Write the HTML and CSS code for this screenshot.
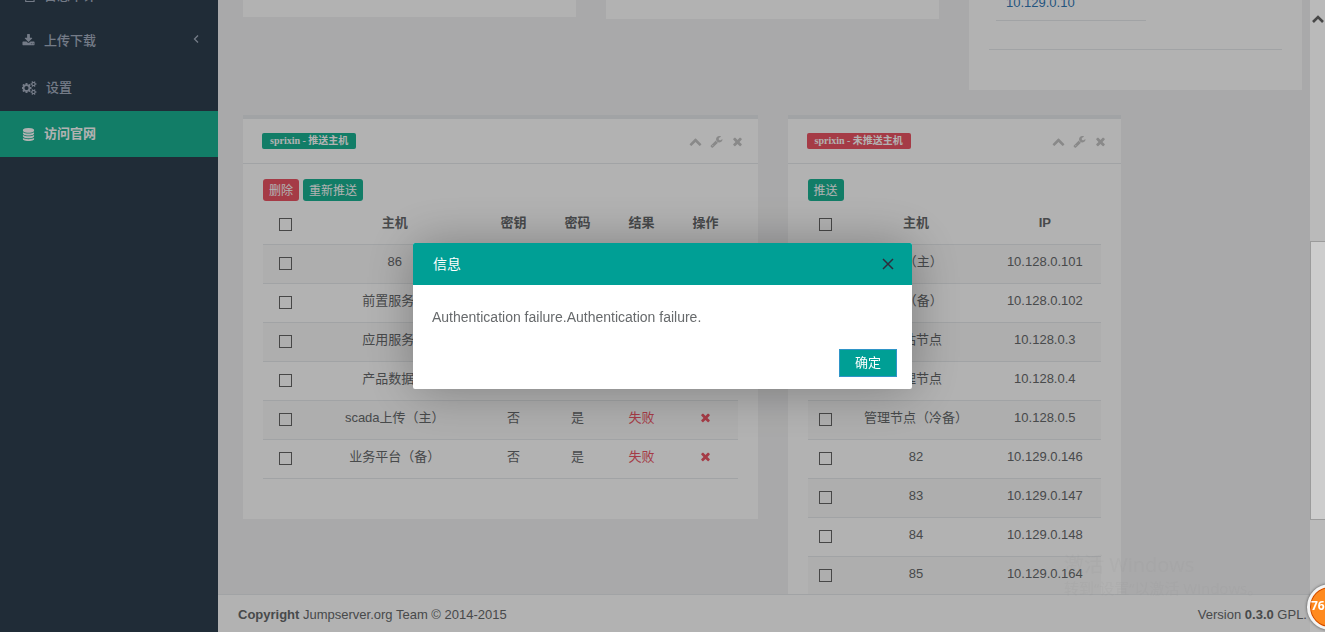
FILE: index.html
```html
<!DOCTYPE html>
<html lang="zh-CN">
<head>
<meta charset="utf-8">
<title>Jumpserver</title>
<link rel="stylesheet" href="styles.css">
</head>
<body>
<svg class="sprite" aria-hidden="true">
  <symbol id="i-download" viewBox="0 0 1792 1792"><path d="M1344 1344q0-26-19-45t-45-19-45 19-19 45 19 45 45 19 45-19 19-45zm256 0q0-26-19-45t-45-19-45 19-19 45 19 45 45 19 45-19 19-45zm128-224v320q0 40-28 68t-68 28h-1472q-40 0-68-28t-28-68v-320q0-40 28-68t68-28h465l135 136q58 56 136 56t136-56l136-136h464q40 0 68 28t28 68zm-325-569q17 41-14 70l-448 448q-18 19-45 19t-45-19l-448-448q-31-29-14-70 17-39 59-39h256v-448q0-26 19-45t45-19h256q26 0 45 19t19 45v448h256q42 0 59 39z"/></symbol>
  <symbol id="i-cogs" viewBox="0 0 1920 1792"><path d="M832 896q0-106-75-181t-181-75-181 75-75 181 75 181 181 75 181-75 75-181zm768 512q0-52-38-90t-90-38-90 38-38 90q0 53 37.500 90.500t90.500 37.500 90.500-37.500 37.500-90.500zm0-1024q0-52-38-90t-90-38-90 38-38 90q0 53 37.500 90.500t90.500 37.500 90.500-37.500 37.500-90.500zm-384 421v185q0 10-7 19.500t-16 10.500l-155 24q-11 35-32 76 34 48 90 115 7 11 7 20 0 12-7 19-23 30-82.500 89.500t-78.500 59.500q-11 0-21-7l-115-90q-37 19-77 31-11 108-23 155-7 24-30 24h-186q-11 0-20-7.500t-10-17.500l-23-153q-34-10-75-31l-118 89q-7 7-20 7-11 0-21-8-144-133-144-160 0-9 7-19 10-14 41-53t47-61q-23-44-35-82l-152-24q-10-1-17-9.500t-7-19.500v-185q0-10 7-19.500t16-10.500l155-24q11-35 32-76-34-48-90-115-7-11-7-20 0-12 7-20 22-30 82-89t79-59q11 0 21 7l115 90q34-18 77-32 11-108 23-154 7-24 30-24h186q11 0 20 7.500t10 17.500l23 153q34 10 75 31l118-89q8-7 20-7 11 0 21 8 144 133 144 160 0 8-7 19-12 16-42 54t-45 60q23 48 34 82l152 23q10 2 17 10.500t7 19.500zm640 533v140q0 16-149 31-12 27-30 52 51 113 51 138 0 4-4 7-122 71-124 71-8 0-46-47t-52-68q-20 2-30 2t-30-2q-14 21-52 68t-46 47q-2 0-124-71-4-3-4-7 0-25 51-138-18-25-30-52-149-15-149-31v-140q0-16 149-31 13-29 30-52-51-113-51-138 0-4 4-7 4-2 35-20t59-34 30-16q8 0 46 46.500t52 67.500q20-2 30-2t30 2q51-71 92-112l6-2q4 0 124 70 4 3 4 7 0 25-51 138 17 23 30 52 149 15 149 31zm0-1024v140q0 16-149 31-12 27-30 52 51 113 51 138 0 4-4 7-122 71-124 71-8 0-46-47t-52-68q-20 2-30 2t-30-2q-14 21-52 68t-46 47q-2 0-124-71-4-3-4-7 0-25 51-138-18-25-30-52-149-15-149-31v-140q0-16 149-31 13-29 30-52-51-113-51-138 0-4 4-7 4-2 35-20t59-34 30-16q8 0 46 46.500t52 67.500q20-2 30-2t30 2q51-71 92-112l6-2q4 0 124 70 4 3 4 7 0 25-51 138 17 23 30 52 149 15 149 31z"/></symbol>
  <symbol id="i-database" viewBox="0 0 1792 1792"><path d="M896 768q237 0 443-43t325-127v170q0 69-103 128t-280 93.500-385 34.500-385-34.500-280-93.500-103-128v-170q119 84 325 127t443 43zm0 768q237 0 443-43t325-127v170q0 69-103 128t-280 93.500-385 34.500-385-34.500-280-93.500-103-128v-170q119 84 325 127t443 43zm0-384q237 0 443-43t325-127v170q0 69-103 128t-280 93.500-385 34.500-385-34.500-280-93.500-103-128v-170q119 84 325 127t443 43zm0-1152q208 0 385 34.500t280 93.500 103 128v128q0 69-103 128t-280 93.500-385 34.500-385-34.500-280-93.500-103-128v-128q0-69 103-128t280-93.500 385-34.500z"/></symbol>
  <symbol id="i-file" viewBox="0 0 14 14"><path fill="none" stroke="currentColor" stroke-width="1.200" d="M4 .6h9v12.800H4z"/></symbol>
  <symbol id="i-angle" viewBox="0 0 8 12"><path fill="none" stroke="currentColor" stroke-width="1.300" d="M6 2.500 2.500 6 6 9.500"/></symbol>
  <symbol id="i-up" viewBox="0 0 1792 1792"><path d="M1683 1331l-166 165q-19 19-45 19t-45-19l-531-531-531 531q-19 19-45 19t-45-19l-166-165q-19-19-19-45.500t19-45.500l742-741q19-19 45-19t45 19l742 741q19 19 19 45.500t-19 45.500z"/></symbol>
  <symbol id="i-wrench" viewBox="0 0 1792 1792"><path d="M448 1472q0-26-19-45t-45-19-45 19-19 45 19 45 45 19 45-19 19-45zm644-420l-682 682q-37 37-90 37-52 0-91-37l-106-108q-38-36-38-90 0-53 38-91l681-681q39 98 114.500 173.500t173.500 114.500zm634-435q0 39-23 106-47 134-164.500 217.500t-258.500 83.500q-185 0-316.500-131.500t-131.500-316.500 131.500-316.500 316.500-131.500q58 0 121.500 16.500t107.500 46.500q16 11 16 28t-16 28l-293 169v224l193 107q5-3 79-48.500t135.500-81 70.500-35.500q15 0 23.500 10t8.500 25z"/></symbol>
  <symbol id="i-times" viewBox="0 0 1792 1792"><path d="M1490 1322q0 40-28 68l-136 136q-28 28-68 28t-68-28l-294-294-294 294q-28 28-68 28t-68-28l-136-136q-28-28-28-68t28-68l294-294-294-294q-28-28-28-68t28-68l136-136q28-28 68-28t68 28l294 294 294-294q28-28 68-28t68 28l136 136q28 28 28 68t-28 68l-294 294 294 294q28 28 28 68z"/></symbol>
</svg>

<div class="shell">
  <nav class="sidebar">
    <a class="nav-item nav-first" href="#"><svg class="icon"><use href="#i-file"/></svg><span>日志审计</span></a>
    <a class="nav-item" href="#"><svg class="icon"><use href="#i-download"/></svg><span>上传下载</span><svg class="nav-arrow"><use href="#i-angle"/></svg></a>
    <a class="nav-item" href="#"><svg class="icon icon-wide"><use href="#i-cogs"/></svg><span>设置</span></a>
    <a class="nav-item active" href="#"><svg class="icon"><use href="#i-database"/></svg><span>访问官网</span></a>
  </nav>

  <div class="main">
    <main class="content">
      <div class="row row-top">
        <section class="card card-end card-end-a"></section>
        <section class="card card-end card-end-b"></section>
        <section class="card card-end card-end-c">
          <div class="ip-list"><a href="#">10.129.0.10</a></div>
          <hr class="rule">
        </section>
      </div>

      <div class="row">
        <section class="card panel span-6">
          <header class="panel-head">
            <h5 class="label primary">sprixin - 推送主机</h5>
            <div class="tools">
              <button type="button" aria-label="收起"><svg><use href="#i-up"/></svg></button>
              <button type="button" aria-label="配置"><svg><use href="#i-wrench"/></svg></button>
              <button type="button" aria-label="关闭面板"><svg><use href="#i-times"/></svg></button>
            </div>
          </header>
          <div class="panel-body">
            <div class="actions">
              <button type="button" class="btn danger">删除</button>
              <button type="button" class="btn primary">重新推送</button>
            </div>
            <table class="table pushed">
              <colgroup><col class="c-check"><col><col class="c-state"><col class="c-state"><col class="c-state"><col class="c-state"></colgroup>
              <thead><tr><th><input type="checkbox" aria-label="全选"></th><th>主机</th><th>密钥</th><th>密码</th><th>结果</th><th>操作</th></tr></thead>
              <tbody>
                <tr><td><input type="checkbox" aria-label="86"></td><td>86</td><td>否</td><td>是</td><td class="bad">失败</td><td class="bad"><svg><use href="#i-times"/></svg></td></tr>
                <tr><td><input type="checkbox" aria-label="前置服务器"></td><td>前置服务器</td><td>否</td><td>是</td><td class="bad">失败</td><td class="bad"><svg><use href="#i-times"/></svg></td></tr>
                <tr><td><input type="checkbox" aria-label="应用服务器"></td><td>应用服务器</td><td>否</td><td>是</td><td class="bad">失败</td><td class="bad"><svg><use href="#i-times"/></svg></td></tr>
                <tr><td><input type="checkbox" aria-label="产品数据库"></td><td>产品数据库</td><td>否</td><td>是</td><td class="bad">失败</td><td class="bad"><svg><use href="#i-times"/></svg></td></tr>
                <tr><td><input type="checkbox" aria-label="scada上传（主）"></td><td>scada上传（主）</td><td>否</td><td>是</td><td class="bad">失败</td><td class="bad"><svg><use href="#i-times"/></svg></td></tr>
                <tr><td><input type="checkbox" aria-label="业务平台（备）"></td><td>业务平台（备）</td><td>否</td><td>是</td><td class="bad">失败</td><td class="bad"><svg><use href="#i-times"/></svg></td></tr>
              </tbody>
            </table>
          </div>
        </section>

        <section class="card panel span-4">
          <header class="panel-head">
            <h5 class="label danger">sprixin - 未推送主机</h5>
            <div class="tools">
              <button type="button" aria-label="收起"><svg><use href="#i-up"/></svg></button>
              <button type="button" aria-label="配置"><svg><use href="#i-wrench"/></svg></button>
              <button type="button" aria-label="关闭面板"><svg><use href="#i-times"/></svg></button>
            </div>
          </header>
          <div class="panel-body">
            <div class="actions">
              <button type="button" class="btn primary">推送</button>
            </div>
            <table class="table pending">
              <colgroup><col class="c-check"><col class="c-host"><col></colgroup>
              <thead><tr><th><input type="checkbox" aria-label="全选"></th><th>主机</th><th>IP</th></tr></thead>
              <tbody>
                <tr><td><input type="checkbox" aria-label="10.128.0.101"></td><td>81（主）</td><td>10.128.0.101</td></tr>
                <tr><td><input type="checkbox" aria-label="10.128.0.102"></td><td>81（备）</td><td>10.128.0.102</td></tr>
                <tr><td><input type="checkbox" aria-label="10.128.0.3"></td><td>网站节点</td><td>10.128.0.3</td></tr>
                <tr><td><input type="checkbox" aria-label="10.128.0.4"></td><td>管理节点</td><td>10.128.0.4</td></tr>
                <tr><td><input type="checkbox" aria-label="10.128.0.5"></td><td>管理节点（冷备）</td><td>10.128.0.5</td></tr>
                <tr><td><input type="checkbox" aria-label="82"></td><td>82</td><td>10.129.0.146</td></tr>
                <tr><td><input type="checkbox" aria-label="83"></td><td>83</td><td>10.129.0.147</td></tr>
                <tr><td><input type="checkbox" aria-label="84"></td><td>84</td><td>10.129.0.148</td></tr>
                <tr><td><input type="checkbox" aria-label="85"></td><td>85</td><td>10.129.0.164</td></tr>
              </tbody>
            </table>
          </div>
        </section>
      </div>
    </main>
    <footer class="footer">
      <div><strong>Copyright</strong> Jumpserver.org Team © 2014-2015</div>
      <div>Version <strong>0.3.0</strong> GPL.</div>
    </footer>
  </div>

  <div class="scrollbar">
    <svg class="scroll-up" viewBox="0 0 12 10"><path d="M1 8 6 3l5 5" fill="none" stroke="#484848" stroke-width="2.600"/></svg>
    <div class="scroll-thumb"></div>
  </div>
</div>

<div class="watermark"><div class="wm-title">激活 Windows</div><div class="wm-text">转到“设置”以激活 Windows。</div></div>
<div class="ball">76</div>

<div class="shade">
  <div class="dialog" role="dialog" aria-labelledby="dlg-title">
    <header class="dialog-head">
      <span id="dlg-title">信息</span>
      <button type="button" class="dialog-close" aria-label="关闭"><svg viewBox="0 0 12 12"><path d="M1 1l10 10M11 1 1 11" fill="none" stroke="#2e2d3c" stroke-width="1.500"/></svg></button>
    </header>
    <p class="dialog-text">Authentication failure.Authentication failure.</p>
    <div class="dialog-actions"><button type="button" class="dialog-ok">确定</button></div>
  </div>
</div>
</body>
</html>
```

FILE: styles.css
```css
* { box-sizing: border-box; }

body {
  margin: 0;
  height: 100vh;
  overflow: hidden;
  font: 13px/18px "Liberation Sans", "Noto Sans CJK SC", sans-serif;
  color: #676a6c;
  background: #f3f3f4;
}

button { font: inherit; border: 0; padding: 0; background: none; cursor: pointer; }
svg { display: block; fill: currentColor; }
.sprite { position: absolute; width: 0; height: 0; }

.shell { display: flex; height: 100vh; }

/* Sidebar, scrolled past its first entries */
.sidebar {
  width: 218px;
  flex: none;
  display: flex;
  flex-direction: column;
  background: #2f4050;
  margin-top: -30px;
}
.nav-item {
  display: flex;
  align-items: center;
  flex: none;
  gap: 9px;
  height: 47px;
  padding: 0 18px 0 22px;
  color: #a7b1c2;
  font-weight: 500;
  text-decoration: none;
}
.nav-item.nav-first { padding-top: 4px; }
.nav-item.active { background: #1ab394; color: #fff; font-weight: 700; height: 46px; }
.icon { width: 13px; height: 13px; }
.icon-wide { width: 15px; height: 14px; }
.nav-arrow { width: 8px; height: 12px; margin: 0 0 4px auto; }

.main { flex: 1; min-width: 0; display: flex; flex-direction: column; }
.content { flex: 1; min-height: 0; overflow: hidden; padding: 0 8px 0 25px; }

.row {
  display: grid;
  grid-template-columns: repeat(12, minmax(0, 1fr));
  column-gap: 30px;
  align-items: start;
}
.row-top { padding-bottom: 25px; }
.span-6 { grid-column: span 6; }
.span-4 { grid-column: span 4; }

.card { background: #fff; }
.card-end { grid-column: span 4; }
.card-end-a { height: 17px; }
.card-end-b { height: 19px; }
.card-end-c { padding: 0 20px 40px; }
.ip-list {
  width: 150px;
  height: 21px;
  margin: 0 0 28px 7px;
  padding: 0 0 8px 10px;
  border-bottom: 1px solid #e7eaec;
  display: flex;
  align-items: flex-end;
}
.ip-list a { color: #337ab7; text-decoration: none; }
.rule { margin: 0; border: 0; border-top: 1px solid #e7eaec; }

.panel { border-top: 4px solid #e7eaec; }
.panel-head {
  display: flex;
  justify-content: space-between;
  height: 45px;
  padding: 14px 14px 0 19px;
  border-bottom: 1px solid #e7eaec;
}
.label {
  margin: 0;
  height: 16px;
  padding: 0 8px;
  border-radius: 2px;
  color: #fff;
  font: 700 10px/16px "Liberation Serif", "Noto Sans CJK SC", serif;
}
.primary { background: #1ab394; }
.danger { background: #ed5565; }
.tools { display: flex; gap: 8px; padding-top: 2px; color: #c4c4c4; }
.tools button { color: inherit; height: 13px; }
.tools svg { width: 13px; height: 13px; }

.panel-body { padding: 15px 20px 40px; }
.actions { display: flex; gap: 4px; }
.btn {
  height: 22px;
  padding: 0 6px;
  border-radius: 3px;
  color: #fff;
  font-size: 12px;
  line-height: 24px;
}

.table { width: 100%; border-collapse: collapse; table-layout: fixed; text-align: center; }
.table th, .table td { height: 39px; padding: 0 0 4px; border-bottom: 1px solid #e7eaec; }
.table thead th { height: 43px; padding: 2px 0 0; }
.table tbody tr:nth-child(odd) { background: #f9f9f9; }
.pushed .c-check { width: 45px; }
.pushed .c-state { width: 64px; }
.pending .c-check { width: 12%; }
.pending .c-host { width: 50%; }
.table td:first-child { padding: 0; }
.table input {
  appearance: none;
  display: block;
  width: 13px;
  height: 13px;
  margin: 0 auto;
  border: 1px solid #666;
  background: #fff;
}
.table th input { margin-top: 2px; }
.table tbody tr:nth-child(odd) input { background: #f9f9f9; }
.bad { color: #ed5565; }
.bad svg { width: 13px; height: 13px; margin: 0 auto; }

.footer {
  flex: none;
  display: flex;
  justify-content: space-between;
  height: 38px;
  padding: 11px 3px 0 20px;
  background: #fff;
  border-top: 1px solid #e7eaec;
}

.scrollbar {
  width: 15px;
  flex: none;
  display: flex;
  flex-direction: column;
  padding-top: 14px;
  background: #bababa;
  position: relative;
  z-index: 11;
}
.scroll-up { width: 12px; height: 10px; margin-left: 2px; flex: none; }
.scroll-thumb { height: 279px; margin-top: 217px; background: #cdcdcd; border: 1px solid #9b9b9b; border-right: 0; }

/* Desktop items floating over the window */
.watermark {
  position: fixed;
  right: 60px;
  bottom: 34px;
  width: 201px;
  z-index: 12;
  color: rgba(150, 150, 150, 0.13);
  font-family: "Open Sans", "Noto Sans CJK SC", sans-serif;
  white-space: nowrap;
}
.wm-title { font-size: 20px; line-height: 26px; }
.wm-text { font-size: 15px; line-height: 20px; }
.ball {
  position: fixed;
  right: -28px;
  bottom: 2px;
  z-index: 13;
  width: 46px;
  height: 46px;
  padding-left: 1px;
  border: 3px solid #f4f4f4;
  border-radius: 50%;
  background: #ff8a1f;
  box-shadow: inset 0 0 0 1px #cf4a00, 0 0 3px rgba(0, 0, 0, 0.6);
  color: #fff;
  font: 700 12px/38px "Open Sans", sans-serif;
}

.shade {
  position: fixed;
  inset: 0;
  z-index: 10;
  display: flex;
  align-items: center;
  justify-content: center;
  background: rgba(0, 0, 0, 0.3);
}
.dialog {
  width: 499px;
  background: #fff;
  border-radius: 2px;
  box-shadow: 1px 1px 50px rgba(0, 0, 0, 0.3);
  overflow: hidden;
}
.dialog-head {
  display: flex;
  align-items: center;
  justify-content: space-between;
  height: 42px;
  padding: 0 18px 0 20px;
  background: #009f95;
  color: #fff;
  font-size: 14px;
}
.dialog-close svg { width: 12px; height: 12px; }
.dialog-text { margin: 0; padding: 20px 20px 20px 19px; font-size: 14px; line-height: 24px; }
.dialog-actions { display: flex; justify-content: flex-end; padding: 0 15px 12px; }
.dialog-ok {
  width: 58px;
  height: 28px;
  border: 1px solid #2f95c8;
  background: #009f95;
  color: #fff;
}
```
